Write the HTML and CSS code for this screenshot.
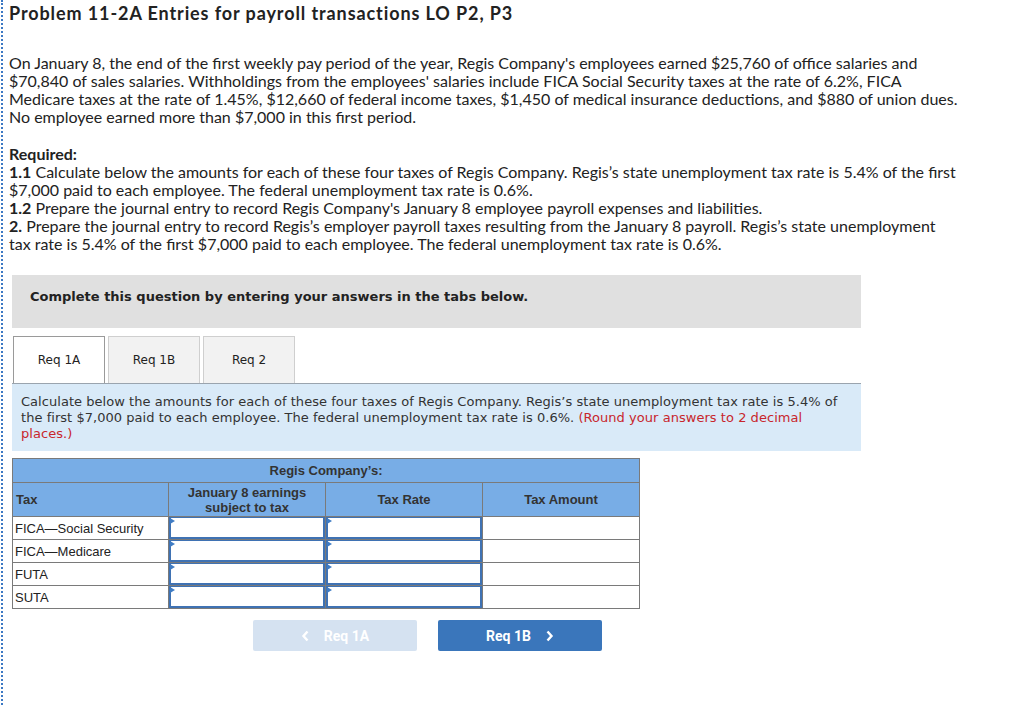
FILE: index.html
```html
<!DOCTYPE html>
<html>
<head>
<meta charset="utf-8">
<link rel="stylesheet" href="styles.css">
</head>
<body>
<div class="page">
  <h1 class="title">Problem 11-2A Entries for payroll transactions LO P2, P3</h1>
  <p class="intro">On January 8, the end of the first weekly pay period of the year, Regis Company's employees earned $25,760 of office salaries and $70,840 of sales salaries. Withholdings from the employees' salaries include FICA Social Security taxes at the rate of 6.2%, FICA Medicare taxes at the rate of 1.45%, $12,660 of federal income taxes, $1,450 of medical insurance deductions, and $880 of union dues. No employee earned more than $7,000 in this first period.</p>
  <div class="required">
    <div class="req-head">Required:</div>
    <div><b>1.1</b> Calculate below the amounts for each of these four taxes of Regis Company. Regis’s state unemployment tax rate is 5.4% of the first $7,000 paid to each employee. The federal unemployment tax rate is 0.6%.</div>
    <div><b>1.2</b> Prepare the journal entry to record Regis Company's January 8 employee payroll expenses and liabilities.</div>
    <div><b>2.</b> Prepare the journal entry to record Regis’s employer payroll taxes resulting from the January 8 payroll. Regis’s state unemployment tax rate is 5.4% of the first $7,000 paid to each employee. The federal unemployment tax rate is 0.6%.</div>
  </div>

  <div class="question">
    <div class="banner">Complete this question by entering your answers in the tabs below.</div>
    <div class="tabs">
      <div class="tab active">Req 1A</div>
      <div class="tab">Req 1B</div>
      <div class="tab">Req 2</div>
    </div>
    <div class="panel">Calculate below the amounts for each of these four taxes of Regis Company. Regis’s state unemployment tax rate is 5.4% of the first $7,000 paid to each employee. The federal unemployment tax rate is 0.6%. <span class="red">(Round your answers to 2 decimal places.)</span></div>

    <table class="grid">
      <colgroup>
        <col class="c1"><col class="c2"><col class="c3"><col class="c4">
      </colgroup>
      <tr class="h1"><th colspan="4">Regis Company’s:</th></tr>
      <tr class="h2">
        <th class="left">Tax</th>
        <th>January 8 earnings<br>subject to tax</th>
        <th>Tax Rate</th>
        <th>Tax Amount</th>
      </tr>
      <tr>
        <td class="label">FICA—Social Security</td>
        <td class="in"><input type="text"></td>
        <td class="in"><input type="text"></td>
        <td></td>
      </tr>
      <tr>
        <td class="label">FICA—Medicare</td>
        <td class="in"><input type="text"></td>
        <td class="in"><input type="text"></td>
        <td></td>
      </tr>
      <tr>
        <td class="label">FUTA</td>
        <td class="in"><input type="text"></td>
        <td class="in"><input type="text"></td>
        <td></td>
      </tr>
      <tr>
        <td class="label">SUTA</td>
        <td class="in"><input type="text"></td>
        <td class="in"><input type="text"></td>
        <td></td>
      </tr>
    </table>

    <div class="nav">
      <div class="btn prev">
        <svg width="9" height="12" viewBox="0 0 9 12"><path d="M6.5 1.5 L2.5 6 L6.5 10.5" fill="none" stroke="#fff" stroke-width="2.4"/></svg>
        <span>Req 1A</span>
      </div>
      <div class="btn next">
        <span>Req 1B</span>
        <svg width="9" height="12" viewBox="0 0 9 12"><path d="M2.5 1.5 L6.5 6 L2.5 10.5" fill="none" stroke="#fff" stroke-width="2.4"/></svg>
      </div>
    </div>
  </div>
</div>
</body>
</html>
```

FILE: styles.css
```css
html, body {
  margin: 0;
  padding: 0;
  background: #fff;
}
.page {
  border-left: 2px dotted #3b78c3;
  margin-left: 1px;
  min-height: 705px;
  box-sizing: border-box;
  padding: 3px 0 0 6px;
  font-family: "Lato", "Liberation Sans", sans-serif;
  color: #222;
}
.title {
  margin: 0;
  font-size: 18px;
  line-height: 20px;
  font-weight: 700;
  letter-spacing: 0.9px;
  color: #222;
}
.intro {
  margin: 31px 0 0 0;
  width: 952px;
  font-size: 16px;
  line-height: 18px;
}
.required {
  margin-top: 19px;
  width: 952px;
  font-size: 16px;
  line-height: 18px;
}
.req-head {
  font-weight: 700;
}
.required b {
  font-weight: 700;
}
.question {
  margin: 22px 0 0 3px;
  width: 849px;
}
.banner {
  background: #e0e0e0;
  height: 53px;
  box-sizing: border-box;
  padding: 14px 0 0 18px;
  font-family: "DejaVu Sans", Verdana, sans-serif;
  font-weight: 700;
  font-size: 13px;
  line-height: 16px;
  color: #222;
}
.tabs {
  display: flex;
  gap: 3px;
  margin-top: 8px;
  padding-left: 1px;
}
.tab {
  width: 92px;
  height: 47px;
  box-sizing: border-box;
  border: 1px solid #cfcfcf;
  border-bottom: none;
  background: #f2f2f2;
  display: flex;
  align-items: center;
  justify-content: center;
  font-family: "DejaVu Sans", Verdana, sans-serif;
  font-size: 12px;
  color: #222;
}
.tab.active {
  background: #fff;
  border-color: #9a9a9a;
}
.panel {
  background: #d9eaf8;
  border-top: 1px solid #9aa4ae;
  padding: 10px 20px 9px 9px;
  font-family: "DejaVu Sans", Verdana, sans-serif;
  font-size: 13px;
  line-height: 16px;
  letter-spacing: 0.04px;
  color: #333;
}
.red {
  color: #c8262c;
}
.grid {
  margin-top: 7px;
  border-collapse: collapse;
  width: 627px;
  table-layout: fixed;
  font-family: "Liberation Sans", Arial, sans-serif;
  font-size: 13px;
  color: #222;
}
.c1 { width: 156px; }
.c2 { width: 157px; }
.c3 { width: 157px; }
.c4 { width: 157px; }
.grid th {
  background: #78ade6;
  border: 1px solid #7a7a7a;
  font-weight: 700;
  color: #333;
  padding: 0;
  line-height: 15px;
}
.grid .h1 th {
  height: 23px;
}
.grid .h2 th {
  height: 33px;
}
.grid th.left {
  text-align: left;
  padding-left: 3px;
}
.grid td {
  border: 1px solid #7a7a7a;
  height: 22px;
  padding: 0;
  background: #fff;
}
.grid td.label {
  padding-left: 2px;
  white-space: nowrap;
}
.grid td.in {
  position: relative;
}
.grid td.in::before {
  content: "";
  position: absolute;
  left: 1px;
  top: 1px;
  border-left: 5px solid #3f7cc4;
  border-top: 3px solid transparent;
  border-bottom: 3px solid transparent;
}
.grid td.in input {
  display: block;
  width: 100%;
  height: 22px;
  box-sizing: border-box;
  margin: 0;
  border: 2px solid #3f72b3;
  border-top-width: 1px;
  background: transparent;
  outline: none;
}
.nav {
  display: flex;
  gap: 21px;
  margin-top: 11px;
  padding-left: 241px;
}
.btn {
  width: 164px;
  height: 31px;
  border-radius: 2px;
  display: flex;
  align-items: center;
  justify-content: center;
  gap: 14px;
  font-family: "Roboto", "Liberation Sans", sans-serif;
  font-weight: 700;
  font-size: 14px;
  color: #fff;
}
.btn.prev {
  background: #d5e2f1;
}
.btn.next {
  background: #3a76bb;
}
```
